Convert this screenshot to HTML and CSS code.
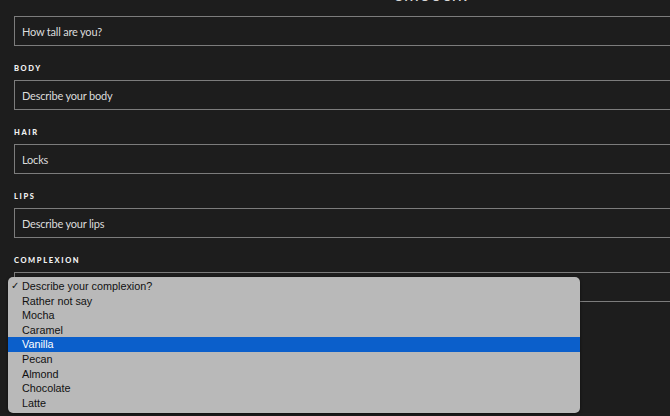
FILE: index.html
```html
<!DOCTYPE html>
<html lang="en">
<head>
<meta charset="utf-8">
<title>Smooch profile</title>
<link rel="stylesheet" href="styles.css">
</head>
<body>
<div class="page">
  <div class="title">smooch!</div>
  <form class="form">
    <div class="group first">
      <input class="field" type="text" placeholder="How tall are you?">
    </div>
    <div class="group">
      <label class="label">Body</label>
      <input class="field" type="text" placeholder="Describe your body">
    </div>
    <div class="group">
      <label class="label">Hair</label>
      <input class="field" type="text" placeholder="Locks">
    </div>
    <div class="group">
      <label class="label">Lips</label>
      <input class="field" type="text" placeholder="Describe your lips">
    </div>
    <div class="group">
      <label class="label">Complexion</label>
      <div class="select-wrap">
        <div class="field select-field">Describe your complexion?</div>
        <ul class="menu">
          <li class="option checked"><span class="check">✓</span>Describe your complexion?</li>
          <li class="option">Rather not say</li>
          <li class="option">Mocha</li>
          <li class="option">Caramel</li>
          <li class="option active">Vanilla</li>
          <li class="option">Pecan</li>
          <li class="option">Almond</li>
          <li class="option">Chocolate</li>
          <li class="option">Latte</li>
        </ul>
      </div>
    </div>
  </form>
</div>
</body>
</html>
```
FILE: styles.css
```css
html, body {
  margin: 0;
  padding: 0;
  background: #1d1d1d;
  overflow: hidden;
  height: 416px;
}

.page {
  width: 836px;
  padding: 0 14px;
}

.title {
  font-family: Lato, "Open Sans", sans-serif;
  font-size: 18px;
  line-height: 18px;
  letter-spacing: 1px;
  color: #d8d8d8;
  text-align: center;
  margin: -15px 0 13px;
}

.form {
  display: flex;
  flex-direction: column;
}

.group {
  display: flex;
  flex-direction: column;
}

.label {
  display: block;
  font-family: Lato, "Open Sans", sans-serif;
  font-weight: 900;
  font-size: 7.5px;
  line-height: 10px;
  letter-spacing: 1.6px;
  text-transform: uppercase;
  color: #f2f2f2;
  margin: 18px 0 6px;
}

.field {
  box-sizing: border-box;
  width: 100%;
  height: 30px;
  margin: 0;
  padding: 0 7px;
  border: 1px solid #7c7c7c;
  border-radius: 0;
  background: #1d1d1d;
  font-family: Lato, "Open Sans", sans-serif;
  font-size: 11px;
  letter-spacing: -0.2px;
  color: #e2e2e2;
  outline: none;
}

.field::placeholder {
  color: #dcdcdc;
  opacity: 1;
}

.select-wrap {
  position: relative;
}

.select-field {
  display: flex;
  align-items: center;
}

.menu {
  position: absolute;
  left: -6px;
  top: 5px;
  width: 572px;
  height: 136px;
  box-sizing: border-box;
  margin: 0;
  padding: 2px 0 0;
  list-style: none;
  background: #b9b9b9;
  border-radius: 5px;
  box-shadow: 0 1px 3px rgba(0, 0, 0, 0.5);
  font-family: "Liberation Sans", Arial, sans-serif;
  font-size: 10.8px;
  color: #111111;
}

.option {
  position: relative;
  height: 14.6px;
  line-height: 14.6px;
  padding-left: 14px;
}

.check {
  position: absolute;
  left: 3px;
  font-size: 10px;
}

.option.active {
  background: #0b5fcb;
  color: #ffffff;
}
```
